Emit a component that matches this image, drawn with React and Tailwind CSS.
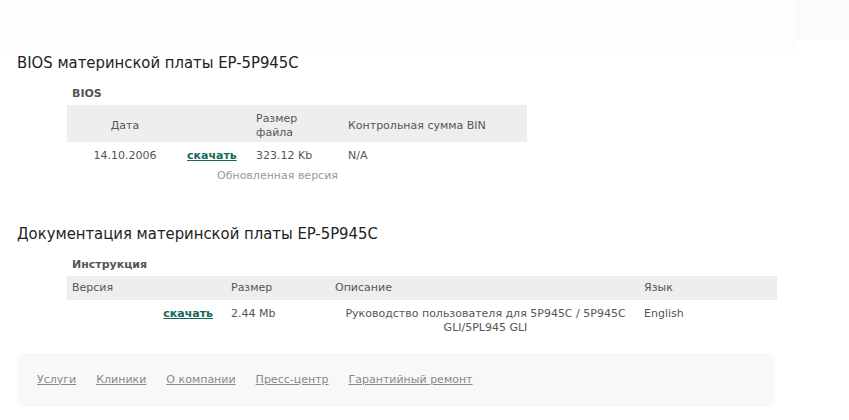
export default function App() {
  const v = { fontFamily: '"DejaVu Sans", Verdana, sans-serif' };
  const h = { fontFamily: '"DejaVu Sans Condensed", "DejaVu Sans", sans-serif' };
  return (
    <div className="relative w-[849px] h-[420px] bg-white text-[#555] overflow-hidden" style={v}>
      <div className="flex h-[50px]">
        <div className="flex-1 bg-[#fdfdfd]" />
        <div className="w-[53px] h-[40px] bg-[#fbfbfb]" />
      </div>
      <h2 className="pl-[17px] mt-[3px] text-[16.5px] leading-[20px] text-[#222]" style={h}>
        BIOS материнской платы EP-5P945C
      </h2>
      <div className="pl-[67px] mt-[14px]">
        <div className="pl-[5px] text-[11px] leading-[14px] font-bold text-[#555]">BIOS</div>
        <table className="mt-[4px] border-collapse text-[11px] leading-[14px]">
          <thead>
            <tr className="bg-[#eeeeee] h-[37px]">
              <th className="w-[116px] font-normal text-center pt-[4px]">Дата</th>
              <th className="w-[69px]"></th>
              <th className="w-[92px] font-normal text-left pl-[4px] pt-[4px]">Размер<br />файла</th>
              <th className="w-[183px] font-normal text-left pl-[4px] pt-[4px]">Контрольная сумма BIN</th>
            </tr>
          </thead>
          <tbody>
            <tr>
              <td className="text-center pt-[7px]">14.10.2006</td>
              <td className="pl-[4px] pt-[7px]"><a className="font-bold text-[#15695a] underline">скачать</a></td>
              <td className="pl-[4px] pt-[7px]">323.12 Kb</td>
              <td className="pl-[4px] pt-[7px]">N/A</td>
            </tr>
            <tr>
              <td></td>
              <td colSpan={2} className="text-left pl-[34px] text-[#999] pt-[6px]">Обновленная версия</td>
              <td></td>
            </tr>
          </tbody>
        </table>
      </div>
      <h2 className="pl-[17px] mt-[41px] text-[16.5px] leading-[20px] text-[#222]" style={h}>
        Документация материнской платы EP-5P945C
      </h2>
      <div className="pl-[67px] mt-[14px]">
        <div className="pl-[5px] text-[11px] leading-[14px] font-bold text-[#555]">Инструкция</div>
        <table className="mt-[4px] border-collapse text-[11px] leading-[14px]">
          <thead>
            <tr className="bg-[#eeeeee] h-[24px]">
              <th className="w-[160px] font-normal text-left pl-[5px]">Версия</th>
              <th className="w-[104px] font-normal text-left pl-[4px]">Размер</th>
              <th className="w-[309px] font-normal text-left pl-[4px]">Описание</th>
              <th className="w-[137px] font-normal text-left pl-[4px]">Язык</th>
            </tr>
          </thead>
          <tbody>
            <tr className="align-top">
              <td className="text-right pr-[14px] pt-[7px]"><a className="font-bold text-[#15695a] underline">скачать</a></td>
              <td className="pl-[4px] pt-[7px]">2.44 Mb</td>
              <td className="text-center pt-[7px]">Руководство пользователя для 5P945C / 5P945C GLI/5PL945 GLI</td>
              <td className="pl-[4px] pt-[7px]">English</td>
            </tr>
          </tbody>
        </table>
      </div>
      <div className="ml-[17px] mt-[18px] w-[758px] h-[54px] rounded-[10px] bg-[#f8f8fa] flex items-center gap-[20px] pl-[20px] text-[11px] text-[#888]">
        <a className="underline">Услуги</a>
        <a className="underline">Клиники</a>
        <a className="underline">О компании</a>
        <a className="underline">Пресс-центр</a>
        <a className="underline">Гарантийный ремонт</a>
      </div>
    </div>
  );
}
